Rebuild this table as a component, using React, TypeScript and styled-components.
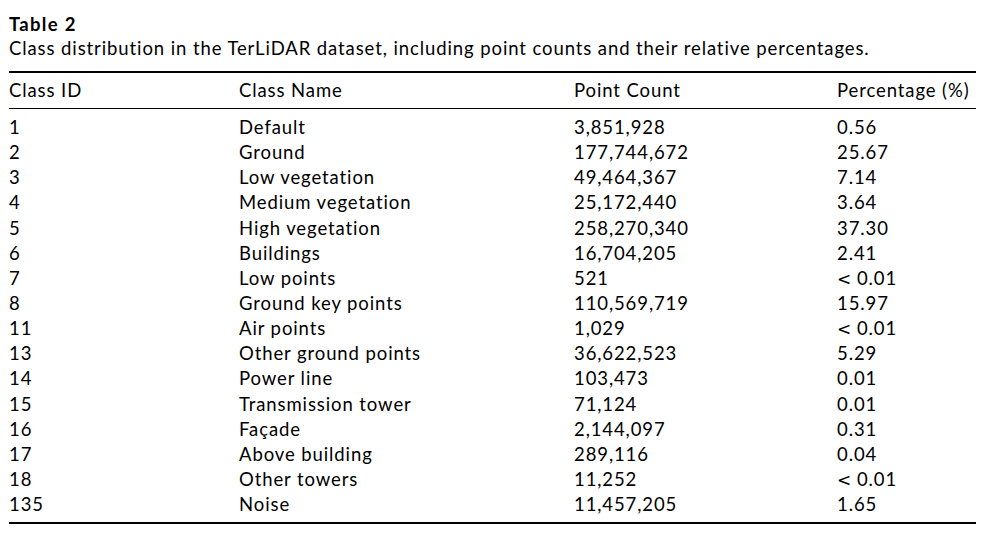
import styled, { createGlobalStyle } from 'styled-components';

const GlobalStyle = createGlobalStyle`
  html, body {
    margin: 0;
    padding: 0;
    background: #ffffff;
  }
  body {
    font-family: Lato, "Open Sans", sans-serif;
    color: #000000;
  }
`;

const rows: [string, string, string, string][] = [
  ['1', 'Default', '3,851,928', '0.56'],
  ['2', 'Ground', '177,744,672', '25.67'],
  ['3', 'Low vegetation', '49,464,367', '7.14'],
  ['4', 'Medium vegetation', '25,172,440', '3.64'],
  ['5', 'High vegetation', '258,270,340', '37.30'],
  ['6', 'Buildings', '16,704,205', '2.41'],
  ['7', 'Low points', '521', '< 0.01'],
  ['8', 'Ground key points', '110,569,719', '15.97'],
  ['11', 'Air points', '1,029', '< 0.01'],
  ['13', 'Other ground points', '36,622,523', '5.29'],
  ['14', 'Power line', '103,473', '0.01'],
  ['15', 'Transmission tower', '71,124', '0.01'],
  ['16', 'Façade', '2,144,097', '0.31'],
  ['17', 'Above building', '289,116', '0.04'],
  ['18', 'Other towers', '11,252', '< 0.01'],
  ['135', 'Noise', '11,457,205', '1.65'],
];

const Page = styled.div`
  width: 967px;
  padding: 12px 0 0 9px;
  font-size: 18.5px;
  letter-spacing: 0.9px;
`;

const Title = styled.div`
  font-weight: 700;
  line-height: 24px;
  letter-spacing: 1.3px;
`;

const Caption = styled.div`
  line-height: 24px;
  margin-bottom: 11px;
`;

const Table = styled.div`
  display: grid;
  grid-template-columns: 230px 335px 263px 139px;
  border-top: 2px solid #000;
  border-bottom: 2px solid #000;
`;

const HeadCell = styled.div`
  line-height: 25px;
  padding: 5px 0 5px;
  border-bottom: 1px solid #000;
`;

const Cell = styled.div<{ $first?: boolean; $last?: boolean }>`
  line-height: 25.15px;
  height: 25.15px;
  padding-top: ${(p) => (p.$first ? '6px' : '0')};
  padding-bottom: ${(p) => (p.$last ? '5px' : '0')};
`;

const Lt = styled.span`
  font-family: "DejaVu Sans", sans-serif;
  font-size: 17px;
  line-height: 0;
  letter-spacing: 0;
`;

const headers = ['Class ID', 'Class Name', 'Point Count', 'Percentage (%)'];

function renderValue(v: string) {
  if (v.startsWith('< ')) {
    return (
      <>
        <Lt>&lt;</Lt> {v.slice(2)}
      </>
    );
  }
  return v;
}

export default function App() {
  return (
    <>
      <GlobalStyle />
      <Page>
        <Title>Table 2</Title>
        <Caption>Class distribution in the TerLiDAR dataset, including point counts and their relative percentages.</Caption>
        <Table>
          {headers.map((h) => (
            <HeadCell key={h}>{h}</HeadCell>
          ))}
          {rows.map((r, i) =>
            r.map((c, j) => (
              <Cell key={`${i}-${j}`} $first={i === 0} $last={i === rows.length - 1}>
                {renderValue(c)}
              </Cell>
            ))
          )}
        </Table>
      </Page>
    </>
  );
}
